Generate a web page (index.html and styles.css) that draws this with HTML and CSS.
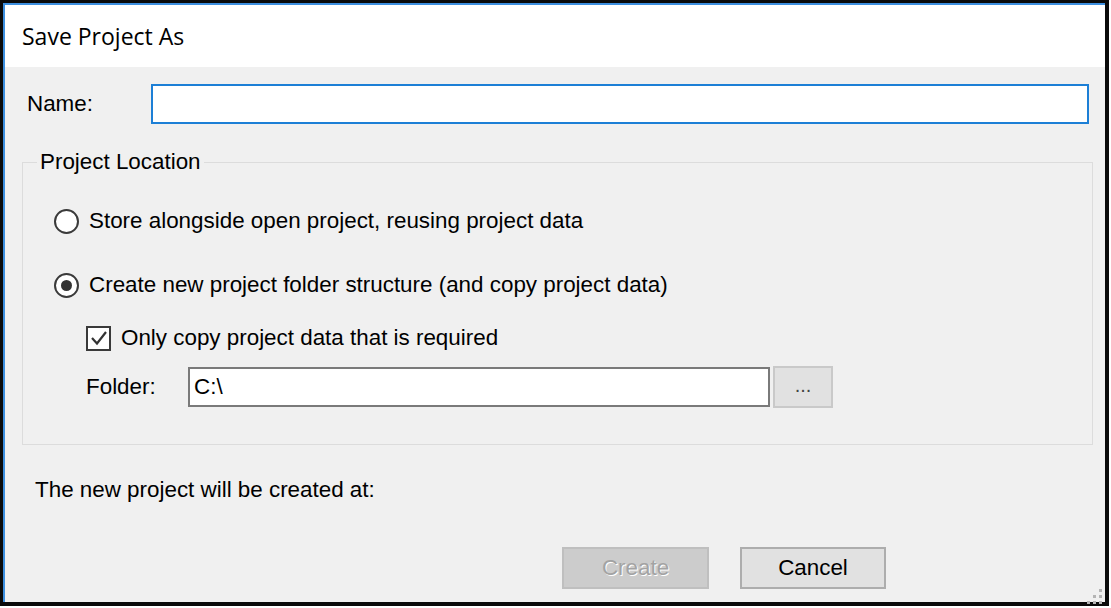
FILE: index.html
```html
<!DOCTYPE html>
<html>
<head>
<meta charset="utf-8">
<link rel="stylesheet" href="styles.css">
</head>
<body>
<div class="frame">
  <div class="window">
    <div class="titlebar"><span class="title">Save Project As</span></div>
    <div class="body">
      <div class="name-row">
        <span class="name-lbl">Name:</span>
        <div class="textbox focused"></div>
      </div>
      <fieldset class="group">
        <legend class="legend">Project Location</legend>
        <div class="option first">
          <span class="radio"></span>
          <span class="opt-text">Store alongside open project, reusing project data</span>
        </div>
        <div class="option second">
          <span class="radio checked"><span class="dot"></span></span>
          <span class="opt-text">Create new project folder structure (and copy project data)</span>
        </div>
        <div class="check-row">
          <span class="checkbox">
            <svg width="20" height="20" viewBox="0 0 20 20"><polyline points="3,10 8,15.5 17,4" fill="none" stroke="#333" stroke-width="2.2"/></svg>
          </span>
          <span class="opt-text">Only copy project data that is required</span>
        </div>
        <div class="folder-row">
          <span class="folder-lbl">Folder:</span>
          <div class="textbox folder-box">C:\</div>
          <div class="browse">...</div>
        </div>
      </fieldset>
      <div class="info">The new project will be created at:</div>
      <div class="buttons">
        <div class="btn disabled">Create</div>
        <div class="btn">Cancel</div>
      </div>
      <div class="grip">
        <svg width="15" height="15" viewBox="0 0 15 15" fill="#b4b4b4">
          <rect x="12" y="0" width="3" height="3"/>
          <rect x="6" y="6" width="3" height="3"/><rect x="12" y="6" width="3" height="3"/>
          <rect x="0" y="12" width="3" height="3"/><rect x="6" y="12" width="3" height="3"/><rect x="12" y="12" width="3" height="3"/>
        </svg>
      </div>
    </div>
  </div>
</div>
</body>
</html>
```
FILE: styles.css
```css
html, body {
  margin: 0;
  padding: 0;
  background: #ffffff;
}
.frame {
  width: 1109px;
  height: 606px;
  box-sizing: border-box;
  border: 3px solid #0a0a0a;
  border-right-width: 4px;
  border-bottom-width: 4px;
  display: flex;
}
.window {
  flex: 1;
  display: flex;
  flex-direction: column;
  border-top: 2px solid #3d8fdf;
  border-left: 2px solid #3d8fdf;
  font-family: "Liberation Sans", Arial, sans-serif;
  font-size: 22.4px;
  color: #000;
}
.titlebar {
  height: 62px;
  background: #ffffff;
  display: flex;
  align-items: center;
  padding-left: 17px;
}
.title {
  font-family: "Open Sans", "Noto Sans", sans-serif;
  font-size: 23px;
  color: #000;
}
.body {
  flex: 1;
  background: #f0f0f0;
  position: relative;
  display: flex;
  flex-direction: column;
  padding-left: 17px;
}
.name-row {
  display: flex;
  align-items: center;
  margin-top: 17px;
  margin-right: 16px;
  padding-left: 5px;
}
.name-lbl {
  width: 124px;
}
.textbox {
  box-sizing: border-box;
  height: 40px;
  background: #fff;
  border: 2px solid #7a7a7a;
  display: flex;
  align-items: center;
  padding-left: 4px;
}
.textbox.focused {
  flex: 1;
  border-color: #1c7fd6;
}
.group {
  margin: 25px 12px 0 0;
  padding: 0 0 36px 0;
  border: 1px solid #dcdcdc;
  min-width: 0;
}
.legend {
  margin-left: 14px;
  padding: 0 3px;
  line-height: 26px;
}
.option {
  display: flex;
  align-items: center;
  height: 30px;
  padding-left: 31px;
}
.option.first { margin-top: 31px; }
.option.second { margin-top: 34px; }
.radio {
  width: 25px;
  height: 25px;
  box-sizing: border-box;
  border: 2px solid #3a3a3a;
  border-radius: 50%;
  background: #fff;
  margin-right: 10px;
  display: flex;
  align-items: center;
  justify-content: center;
}
.dot {
  width: 11px;
  height: 11px;
  border-radius: 50%;
  background: #333;
}
.check-row {
  display: flex;
  align-items: center;
  height: 30px;
  margin-top: 23px;
  padding-left: 63px;
}
.checkbox {
  width: 25px;
  height: 25px;
  box-sizing: border-box;
  border: 2px solid #3a3a3a;
  background: #fff;
  margin-right: 10px;
  display: flex;
  align-items: center;
  justify-content: center;
}
.folder-row {
  display: flex;
  align-items: center;
  height: 42px;
  margin-top: 13px;
  padding-left: 63px;
}
.folder-lbl {
  width: 102px;
}
.folder-box {
  width: 582px;
  padding-left: 4px;
}
.browse {
  box-sizing: border-box;
  width: 60px;
  height: 42px;
  margin-left: 3px;
  background: #e1e1e1;
  border: 2px solid #c9c9c9;
  display: flex;
  align-items: center;
  justify-content: center;
  font-size: 20px;
  color: #444;
  padding-bottom: 4px;
}
.info {
  margin-top: 32px;
  margin-left: 13px;
  line-height: 26px;
}
.buttons {
  display: flex;
  justify-content: flex-end;
  gap: 31px;
  margin-top: 44px;
  padding-right: 219px;
}
.btn {
  box-sizing: border-box;
  width: 146px;
  height: 42px;
  background: #e1e1e1;
  border: 2px solid #adadad;
  display: flex;
  align-items: center;
  justify-content: center;
}
.btn.disabled {
  width: 147px;
  background: #cccccc;
  border-color: #bfbfbf;
  color: #a3a3a3;
  text-shadow: 1px 1px 0 #ffffff;
}
.grip {
  position: absolute;
  right: 3px;
  bottom: 3px;
  width: 15px;
  height: 15px;
}
```
